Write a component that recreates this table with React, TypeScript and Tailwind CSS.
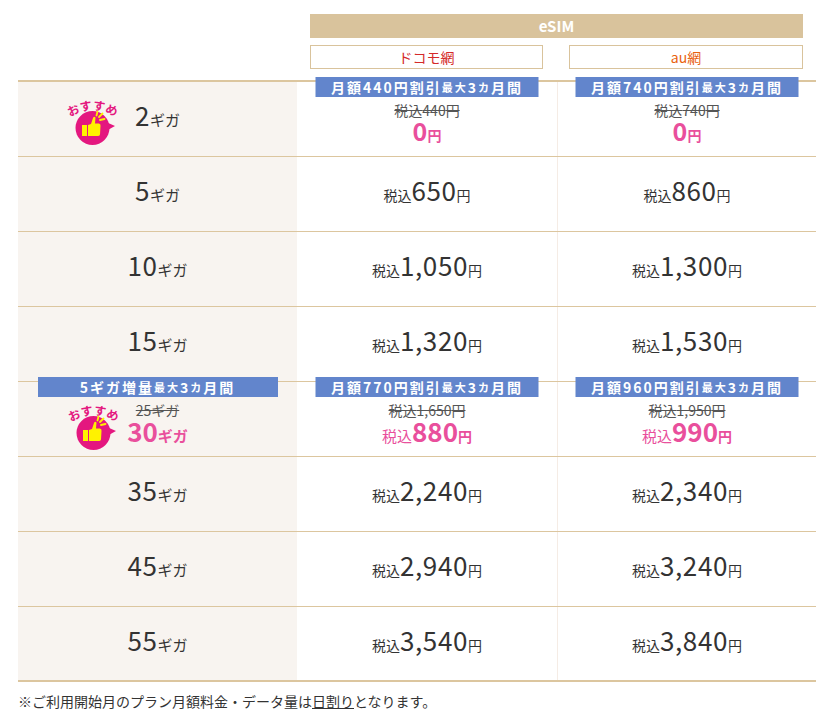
import { useId } from 'react';

const Badge = ({ className }: { className: string }) => {
  const id = useId().replace(/:/g, '');
  return (
    <svg className={`${className} overflow-visible`} width="50" height="52" viewBox="0 0 50 52">
      <defs>
        <path id={`arc${id}`} d="M -4 26 Q 24.5 4 53 26" />
      </defs>
      <text fontSize="12" fontWeight="700" fill="#e4177f">
        <textPath href={`#arc${id}`} startOffset="50%" textAnchor="middle">
          おすすめ
        </textPath>
      </text>
      <circle cx="24.5" cy="33" r="17" fill="#e4177f" />
      <polygon points="38,27 47,31 38,36" fill="#e4177f" />
      {/* cuff */}
      <rect x="14" y="30" width="5" height="11" fill="#fff200" />
      {/* hand */}
      <path
        d="M20 30 L23 29 L25 23 Q26 21 27.5 22.5 L27 28.5 L31 28.5 Q33 29 32.5 31 L32 39.5 Q31.5 41 30 41 L20 41 Z"
        fill="#fff200"
      />
      {/* rays */}
      <g stroke="#fff200" strokeWidth="1.8" strokeLinecap="round">
        <line x1="28.5" y1="20.5" x2="29.5" y2="16.5" />
        <line x1="31" y1="22" x2="34.5" y2="18.5" />
        <line x1="32" y1="25" x2="36.5" y2="24" />
      </g>
    </svg>
  );
};

const Label = ({ lead, wide }: { lead: string; wide?: boolean }) => (
  <div
    className={`absolute left-1/2 -translate-x-1/2 -top-[5px] h-[20px] ${wide ? 'w-[240px]' : 'w-[223px]'} bg-[#6285cc] text-white font-bold text-[14px] tracking-[2px] whitespace-nowrap flex items-center justify-center leading-none z-10`}
  >
    {lead}
    <span className="text-[11px]">最大</span>3<span className="text-[11px]">カ</span>月間
  </div>
);

const Price = ({ value }: { value: string }) => (
  <div className="flex items-baseline text-[#333] leading-none">
    <span className="text-[14px]">税込</span>
    <span className="text-[26px] tracking-[0.6px]">{value}</span>
    <span className="text-[14px]">円</span>
  </div>
);

const topRows = [
  { gb: '5', docomo: '650', au: '860' },
  { gb: '10', docomo: '1,050', au: '1,300' },
  { gb: '15', docomo: '1,320', au: '1,530' },
];

const rows = [
  { gb: '35', docomo: '2,240', au: '2,340' },
  { gb: '45', docomo: '2,940', au: '3,240' },
  { gb: '55', docomo: '3,540', au: '3,840' },
];

const Gb = ({ gb }: { gb: string }) => (
  <div className="flex items-baseline text-[#333] leading-none">
    <span className="text-[26px] tracking-[0.6px]">{gb}</span>
    <span className="text-[15px]">ギガ</span>
  </div>
);

const PlainRow = ({ gb, docomo, au, last }: { gb: string; docomo: string; au: string; last?: boolean }) => (
  <div
    className={`grid grid-cols-[279px_260px_259px] h-[75px] border-[#dcc69f] ${last ? 'border-b-2' : 'border-b'}`}
  >
    <div className="bg-[#f8f4f0] flex items-center justify-center pb-[8px]">
      <Gb gb={gb} />
    </div>
    <div className="flex items-center justify-center pb-[8px]">
      <Price value={docomo} />
    </div>
    <div className="flex items-center justify-center pb-[8px] border-l border-[#f5ece5]">
      <Price value={au} />
    </div>
  </div>
);

const Discount = ({ before, after, taxPink }: { before: string; after: string; taxPink?: boolean }) => (
  <div className="flex flex-col items-center leading-none">
    <span className="text-[14px] text-[#555] line-through">税込{before}円</span>
    <div className="flex items-baseline text-[#e94f9c] font-bold mt-[1px]">
      {taxPink && <span className="text-[15px] font-normal">税込</span>}
      <span className={taxPink ? 'text-[26px]' : 'text-[25px]'}>{after}</span>
      <span className="text-[14px]">円</span>
    </div>
  </div>
);

export default function App() {
  return (
    <div className="w-[830px] h-[720px] bg-white pt-[14px] pl-[18px] pr-[14px] font-['Noto_Sans_CJK_JP','Noto_Sans',sans-serif]">
      {/* header */}
      <div className="grid grid-cols-[279px_519px]">
        <div />
        <div className="px-[13px]">
          <div className="h-[24px] bg-[#d9c39c] text-white font-bold text-[15px] flex items-center justify-center">
            eSIM
          </div>
        </div>
      </div>
      <div className="grid grid-cols-[279px_260px_259px] mt-[7px] mb-[11px]">
        <div />
        <div className="pl-[13px] pr-[14px]">
          <div className="h-[24px] border border-[#d9c39c] text-[#d42a2a] text-[14px] flex items-center justify-center">
            ドコモ網
          </div>
        </div>
        <div className="pl-[12px] pr-[13px]">
          <div className="h-[24px] border border-[#d9c39c] text-[#e9620f] text-[14px] flex items-center justify-center">
            au網
          </div>
        </div>
      </div>

      {/* table */}
      <div className="border-t-2 border-[#dcc69f]">
        <div className="grid grid-cols-[279px_260px_259px] h-[75px] border-b border-[#dcc69f]">
          <div className="relative bg-[#f8f4f0] flex items-center justify-center pb-[8px]">
            <Badge className="absolute left-[50px] top-[13px]" />
            <Gb gb="2" />
          </div>
          <div className="relative flex items-center justify-center pt-[7px]">
            <Label lead="月額440円割引" />
            <Discount before="440" after="0" />
          </div>
          <div className="relative flex items-center justify-center pt-[7px] border-l border-[#f5ece5]">
            <Label lead="月額740円割引" />
            <Discount before="740" after="0" />
          </div>
        </div>

        {topRows.map((r) => (
          <PlainRow key={r.gb} {...r} />
        ))}

        <div className="grid grid-cols-[279px_260px_259px] h-[75px] border-b border-[#dcc69f]">
          <div className="relative bg-[#f8f4f0] flex items-center justify-center pt-[8px]">
            <Label lead="5ギガ増量" wide />
            <Badge className="absolute left-[51px] top-[18px]" />
            <div className="flex flex-col items-center leading-none">
              <span className="text-[14px] text-[#555] line-through">25ギガ</span>
              <div className="flex items-baseline text-[#e94f9c] font-bold mt-[1px]">
                <span className="text-[26px]">30</span>
                <span className="text-[15px]">ギガ</span>
              </div>
            </div>
          </div>
          <div className="relative flex items-center justify-center pt-[8px]">
            <Label lead="月額770円割引" />
            <Discount before="1,650" after="880" taxPink />
          </div>
          <div className="relative flex items-center justify-center pt-[8px] border-l border-[#f5ece5]">
            <Label lead="月額960円割引" />
            <Discount before="1,950" after="990" taxPink />
          </div>
        </div>

        {rows.map((r, i) => (
          <PlainRow key={r.gb} {...r} last={i === rows.length - 1} />
        ))}
      </div>

      <p className="mt-[9px] text-[14px] text-[#333] leading-[20px]">
        ※ご利用開始月のプラン月額料金・データ量は<span className="underline">日割り</span>となります。
      </p>
    </div>
  );
}
